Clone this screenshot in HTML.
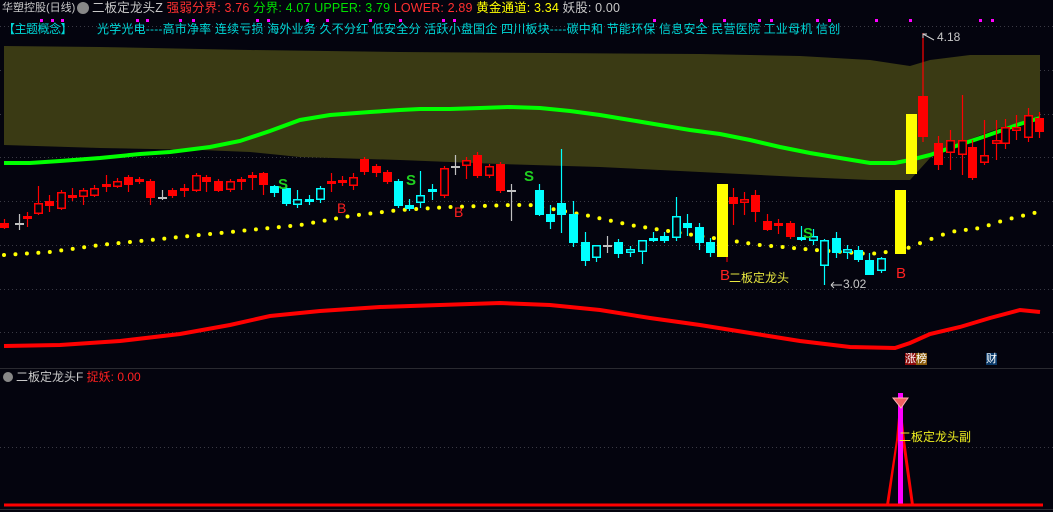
<!DOCTYPE html>
<html><head><meta charset="utf-8"><style>
html,body{margin:0;padding:0;background:#04040e;width:1053px;height:512px;overflow:hidden;font-family:"Liberation Sans","Noto Sans CJK SC",sans-serif;}
.t{position:absolute;white-space:nowrap;font-size:12px;line-height:14px}
svg{position:absolute;left:0;top:0}
</style></head><body>
<svg id="s" width="1053" height="512" xmlns="http://www.w3.org/2000/svg">
<g stroke="#3a3a44" stroke-dasharray="1,3" stroke-width="1">
<line x1="0" y1="26.5" x2="1053" y2="26.5"/><line x1="0" y1="70.5" x2="1053" y2="70.5"/><line x1="0" y1="114.5" x2="1053" y2="114.5"/><line x1="0" y1="157.5" x2="1053" y2="157.5"/><line x1="0" y1="201.5" x2="1053" y2="201.5"/><line x1="0" y1="245.5" x2="1053" y2="245.5"/><line x1="0" y1="289.5" x2="1053" y2="289.5"/><line x1="0" y1="332.5" x2="1053" y2="332.5"/><line x1="0" y1="447.5" x2="1053" y2="447.5"/>
</g>
<line x1="0" y1="368.5" x2="1053" y2="368.5" stroke="#2a2a30"/>
<line x1="0" y1="509.5" x2="1053" y2="509.5" stroke="#2a2a30"/>
<polygon fill="#3a3a14" points="4,46 100,47 250,50 400,52 550,53 700,54 800,56 870,60 910,66 930,60 970,55 1040,55 1040,118 1000,128 960,143 930,158 910,180 870,180 800,177 700,172 600,167 500,164 400,160 300,157 250,152 200,150 100,148 4,145"/>
<polyline fill="none" stroke="#00ff00" stroke-width="4" points="4,163 30,163 60,161 100,158 140,154 170,152 210,147 240,141 270,131 300,120 330,115 370,112 400,110 420,109 450,109 480,108 510,107 540,108 570,111 600,115 630,120 660,125 690,130 720,134 750,140 780,147 810,153 840,158 870,163 895,163 910,160 930,155 950,148 980,138 1000,131 1020,124 1040,118"/>
<polyline fill="none" stroke="#ff0000" stroke-width="4" points="4,346 60,345 120,341 180,334 230,325 270,316 320,311 380,307 440,305 500,303 550,305 600,310 650,318 700,325 750,333 800,341 850,347 895,348 910,343 930,334 960,327 990,318 1020,310 1040,312"/>
<g id="dots" fill="#ffff00"></g>
<g id="cand"></g>
<polygon fill="#ff0000" points="886,505 896,440 900,395 905,440 914,505 911,505 902,440 900,410 898,440 889,505"/>
<rect x="898" y="393" width="5" height="112" fill="#ff00ff"/>
<path d="M893,398 L908,398 L901,408 Z" fill="#f06060" stroke="#ffb0b0"/>
<line x1="4" y1="505" x2="1043" y2="505" stroke="#ff0000" stroke-width="3"/>
<g fill="#ff00ff">
<rect x="40" y="19" width="3" height="3"/><rect x="51" y="19" width="3" height="3"/><rect x="61" y="19" width="3" height="3"/><rect x="136" y="19" width="3" height="3"/><rect x="146" y="19" width="3" height="3"/><rect x="179" y="19" width="3" height="3"/><rect x="192" y="19" width="3" height="3"/><rect x="256" y="19" width="3" height="3"/><rect x="267" y="19" width="3" height="3"/><rect x="306" y="19" width="3" height="3"/><rect x="326" y="19" width="3" height="3"/><rect x="369" y="19" width="3" height="3"/><rect x="399" y="19" width="3" height="3"/><rect x="442" y="19" width="3" height="3"/><rect x="453" y="19" width="3" height="3"/><rect x="653" y="19" width="3" height="3"/><rect x="700" y="19" width="3" height="3"/><rect x="723" y="19" width="3" height="3"/><rect x="758" y="19" width="3" height="3"/><rect x="770" y="19" width="3" height="3"/><rect x="816" y="19" width="3" height="3"/><rect x="828" y="19" width="3" height="3"/><rect x="875" y="19" width="3" height="3"/><rect x="909" y="19" width="3" height="3"/><rect x="979" y="19" width="3" height="3"/><rect x="991" y="19" width="3" height="3"/>
</g>
<circle cx="8" cy="377" r="5" fill="#888"/>
<circle cx="83" cy="8" r="6" fill="#888"/>
<path d="M923,38 L923,34 L927,34 M923,34 L934,40" stroke="#ccc" fill="none"/>
<path d="M831,285 L842,285 M831,285 L834,282 M831,285 L834,288" stroke="#ccc" fill="none"/>
</svg>
<div class="t" style="left:2px;top:1px;color:#c8c8c8;font-size:11px">华塑控股(日线)</div>
<div class="t" style="left:92px;top:1px;color:#c8c8c8;font-size:12.5px;letter-spacing:0.15px">二板定龙头Z <span style="color:#ff3030">强弱分界: 3.76</span> <span style="color:#00e000">分界: 4.07</span> <span style="color:#00e000">UPPER: 3.79</span> <span style="color:#ff3030">LOWER: 2.89</span> <span style="color:#ffff00">黄金通道: 3.34</span> <span style="color:#c8c8c8">妖股: 0.00</span></div>
<div class="t" style="left:3px;top:22px;color:#00d8d8;letter-spacing:-0.5px">【主题概念】</div>
<div class="t" style="left:97px;top:22px;color:#00d8d8;letter-spacing:0.2px">光学光电----高市净率 连续亏损 海外业务 久不分红 低安全分 活跃小盘国企 四川板块----碳中和 节能环保 信息安全 民营医院 工业母机 信创</div>
<div class="t" style="left:937px;top:30px;color:#c8c8c8">4.18</div>
<div class="t" style="left:843px;top:277px;color:#c8c8c8">3.02</div>
<div class="t" style="left:720px;top:267px;color:#ff2020;font-size:15px;line-height:17px">B</div>
<div class="t" style="left:729px;top:271px;color:#e8e840">二板定龙头</div>
<div class="t" style="left:896px;top:265px;color:#ff2020;font-size:15px;line-height:17px">B</div>
<div class="t" style="left:337px;top:200px;color:#ff2020;font-size:14px;line-height:16px">B</div>
<div class="t" style="left:454px;top:204px;color:#ff2020;font-size:14px;line-height:16px">B</div>
<div class="t" style="left:278px;top:176px;color:#20d020;font-size:15px;line-height:17px;font-weight:bold">S</div>
<div class="t" style="left:406px;top:172px;color:#20d020;font-size:15px;line-height:17px;font-weight:bold">S</div>
<div class="t" style="left:524px;top:168px;color:#20d020;font-size:15px;line-height:17px;font-weight:bold">S</div>
<div class="t" style="left:803px;top:225px;color:#20d020;font-size:15px;line-height:17px;font-weight:bold">S</div>
<div class="t" style="left:905px;top:353px;font-size:11px;line-height:13px;color:#fff"><span style="background:#8a0a0a">涨</span><span style="background:#8a5a0a">榜</span></div>
<div class="t" style="left:986px;top:353px;font-size:11px;line-height:13px;color:#fff"><span style="background:#0a3a6a">财</span></div>
<div class="t" style="left:16px;top:370px;color:#c8c8c8">二板定龙头F <span style="color:#ff2020">捉妖: 0.00</span></div>
<div class="t" style="left:899px;top:430px;color:#f0f020">二板定龙头副</div>
<script>
var NS="http://www.w3.org/2000/svg";
function el(p,t,a){var e=document.createElementNS(NS,t);for(var k in a)e.setAttribute(k,a[k]);p.appendChild(e);}
var dp=[[4,255],[50,252],[100,245],[150,240],[200,235],[250,230],[300,225],[350,216],[400,210],[450,207],[510,205],[530,205],[585,215],[630,225],[700,236],[760,245],[815,250],[870,254],[903,250],[915,245],[950,232],[980,228],[1005,220],[1042,211]];
function iy(x){for(var i=0;i<dp.length-1;i++){if(x>=dp[i][0]&&x<=dp[i+1][0]){var f=(x-dp[i][0])/(dp[i+1][0]-dp[i][0]);return dp[i][1]+f*(dp[i+1][1]-dp[i][1]);}}return dp[dp.length-1][1];}
var dg=document.getElementById("dots");
for(var x=4;x<=1042;x+=11.45){el(dg,"circle",{cx:x,cy:iy(x),r:2});}
var R="#ff0000",C="#00ffff",G="#c0c0c0",Y="#ffff00";
var cs=[[0,223,228,219,229,R,1],[15,223,224,214,230,G,1],[23,216,219,212,227,R,0],[34,203,214,186,215,R,0],[45,201,206,195,212,R,1],[57,192,209,190,210,R,0],[68,195,198,188,201,R,1],[79,190,197,188,205,R,0],[90,188,196,185,197,R,0],[102,184,187,175,192,R,0],[113,181,187,178,188,R,0],[124,177,185,175,192,R,1],[135,179,182,177,184,R,1],[146,181,198,179,205,R,1],[158,197,198,190,200,G,1],[168,190,196,188,198,R,1],[180,188,191,184,197,R,1],[192,175,191,173,192,R,0],[202,177,182,175,192,R,1],[214,181,191,179,192,R,1],[226,181,190,179,192,R,0],[237,179,181,177,190,R,0],[248,175,178,172,190,R,0],[259,173,185,172,195,R,1],[270,186,193,185,197,C,1],[282,188,204,186,206,C,1],[293,199,205,190,208,C,0],[305,199,201,195,205,C,0],[316,188,200,186,203,C,0],[327,181,184,173,192,R,0],[338,180,183,176,186,R,1],[349,177,186,173,190,R,0],[360,159,172,157,175,R,1],[372,166,173,164,177,R,1],[383,172,182,170,184,R,1],[394,181,206,179,208,C,1],[405,205,209,199,211,C,1],[416,195,203,171,208,C,0],[428,189,192,184,200,C,0],[440,168,196,166,198,R,0],[451,166,167,155,175,G,1],[462,160,166,157,179,R,0],[473,155,176,152,178,R,1],[485,166,176,164,178,R,0],[496,164,191,162,193,R,1],[507,190,191,184,221,G,1],[535,190,215,184,216,C,1],[546,214,222,205,229,C,1],[557,203,215,149,233,C,1],[569,214,243,201,247,C,1],[581,242,261,232,266,C,1],[592,245,258,245,262,C,0],[603,245,246,236,253,G,1],[614,242,254,239,258,C,1],[626,249,253,246,257,C,0],[638,240,252,240,264,C,0],[649,238,240,232,242,C,0],[660,236,241,232,243,C,1],[672,216,238,197,241,C,0],[683,223,228,214,236,C,1],[695,227,243,223,250,C,1],[706,242,253,238,257,C,1],[729,197,204,188,225,R,1],[740,199,203,192,215,R,0],[751,195,212,190,222,R,1],[763,221,230,214,231,R,1],[774,223,225,219,234,R,0],[786,223,237,221,239,R,1],[797,237,239,226,241,C,0],[809,236,241,229,245,C,0],[820,240,266,239,285,C,0],[832,238,253,232,258,C,1],[843,249,253,245,259,C,0],[854,250,260,246,262,C,1],[865,260,275,253,275,C,1],[877,258,271,257,273,C,0],[934,143,165,136,170,R,1],[946,140,153,130,170,R,0],[958,140,155,95,175,R,0],[968,147,178,140,180,R,1],[980,155,163,120,165,R,0],[992,140,144,120,160,R,0],[1001,127,144,119,149,R,0],[1012,127,131,115,140,R,0],[1024,115,138,108,142,R,0],[1035,118,132,112,138,R,1]];
var cg=document.getElementById("cand");
cs.forEach(function(c){var cx=c[0]+4.5;el(cg,"line",{x1:cx,y1:c[3],x2:cx,y2:c[4],stroke:c[5],"stroke-width":1.2});
if(c[6])el(cg,"rect",{x:c[0],y:c[1],width:9,height:Math.max(2,c[2]-c[1]),fill:c[5]});
else el(cg,"rect",{x:c[0]+0.75,y:c[1]+0.75,width:7.5,height:Math.max(1.5,c[2]-c[1]-1.5),fill:"#04040e",stroke:c[5],"stroke-width":1.5});});
el(cg,"rect",{x:717,y:184,width:11,height:73,fill:Y});
el(cg,"rect",{x:895,y:190,width:11,height:64,fill:Y});
el(cg,"rect",{x:906,y:114,width:11,height:60,fill:Y});
el(cg,"line",{x1:923,y1:33,x2:923,y2:142,stroke:R,"stroke-width":1.2});
el(cg,"rect",{x:918,y:96,width:10,height:41,fill:R});
el(cg,"line",{x1:727,y1:257,x2:727,y2:262,stroke:R});
</script>
</body></html>
